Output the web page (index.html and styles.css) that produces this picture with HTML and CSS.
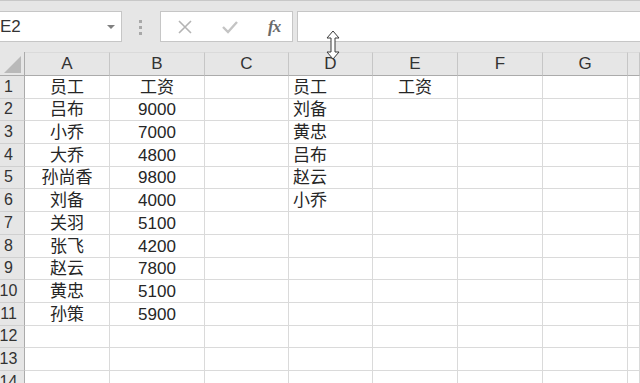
FILE: index.html
```html
<!DOCTYPE html>
<html lang="zh-CN">
<head>
    <meta charset="UTF-8">
    <title>工资表</title>
    <link rel="stylesheet" href="styles.css">
</head>
<body>
    <!-- Строка формул -->
    <div class="toolbar">
        <div class="name-box">
            <span class="cell-ref">E2</span>
            <span class="drop-arrow"></span>
        </div>
        <div class="grip"><i></i><i></i><i></i></div>
        <div class="formula-buttons">
            <svg class="btn-icon" width="14" height="14" viewBox="0 0 14 14"><path d="M1 1L13 13M13 1L1 13" stroke="#b4b4b4" stroke-width="1.6" fill="none"/></svg>
            <svg class="btn-icon" width="16" height="14" viewBox="0 0 16 14"><path d="M1 7L6 12L15 2" stroke="#c4c4c4" stroke-width="2.4" fill="none"/></svg>
            <span class="fx">fx</span>
        </div>
        <div class="formula-input"></div>
    </div>

    <!-- Лист -->
    <div class="sheet" id="sheet"></div>

    <svg class="cursor" width="18" height="30" viewBox="0 0 18 30">
        <path d="M9 1L15 8H11V22H15L9 29L3 22H7V8H3Z" fill="#fff" stroke="#3a3a3a" stroke-width="1"/>
    </svg>

    <script>
        const cols = ['A', 'B', 'C', 'D', 'E', 'F', 'G', ''];
        const rows = [
            ['员工', '工资', '', '员工', '工资'],
            ['吕布', '9000', '', '刘备'],
            ['小乔', '7000', '', '黄忠'],
            ['大乔', '4800', '', '吕布'],
            ['孙尚香', '9800', '', '赵云'],
            ['刘备', '4000', '', '小乔'],
            ['关羽', '5100'],
            ['张飞', '4200'],
            ['赵云', '7800'],
            ['黄忠', '5100'],
            ['孙策', '5900'],
            [], [], []
        ];

        const sheet = document.getElementById('sheet');
        const add = (cls, text) => {
            const el = document.createElement('div');
            el.className = cls;
            el.textContent = text || '';
            sheet.appendChild(el);
        };

        add('corner');
        cols.forEach(c => add('col-head', c));
        rows.forEach((row, i) => {
            add('row-head', i + 1);
            cols.forEach((c, j) => add(c === 'D' ? 'cell left' : 'cell', row[j]));
        });
    </script>
</body>
</html>
```

FILE: styles.css
```css
* {
    box-sizing: border-box;
    margin: 0;
    padding: 0;
}

body {
    width: 640px;
    height: 383px;
    overflow: hidden;
    position: relative;
    font-family: "Liberation Sans", "Noto Sans CJK SC", sans-serif;
    color: #262626;
    background: #fff;
}

/* Строка формул */
.toolbar {
    display: flex;
    align-items: flex-start;
    height: 52px;
    padding-top: 10px;
    background: #e6e6e6;
    border-top: 1px solid #c8c8c8;
}

.name-box {
    display: flex;
    align-items: center;
    justify-content: space-between;
    width: 123px;
    height: 31px;
    margin-left: -1px;
    padding: 0 6px 0 0;
    background: #fff;
    border: 1px solid #c6c6c6;
}

.cell-ref {
    font-size: 17px;
    color: #333;
}

.drop-arrow {
    width: 0;
    height: 0;
    border-left: 4px solid transparent;
    border-right: 4px solid transparent;
    border-top: 4px solid #808080;
}

.grip {
    display: flex;
    flex-direction: column;
    gap: 3px;
    width: 38px;
    padding: 9px 0 0 17px;
}

.grip i {
    width: 3px;
    height: 3px;
    background: #a8a8a8;
}

.formula-buttons {
    display: flex;
    align-items: center;
    gap: 30px;
    width: 133px;
    height: 31px;
    padding-left: 17px;
    background: #fff;
    border: 1px solid #c6c6c6;
}

.fx {
    font-family: "Liberation Serif", serif;
    font-style: italic;
    font-weight: bold;
    font-size: 17px;
    color: #6a6a6a;
    letter-spacing: -1px;
}

.formula-input {
    flex: 1;
    height: 31px;
    margin-left: 4px;
    background: #fff;
    border: 1px solid #c6c6c6;
    border-right: none;
}

/* Лист */
.sheet {
    display: grid;
    grid-template-columns: 25px 85px 95px 84px 84px 85px 85px 85px 1fr;
    grid-template-rows: 24px;
    grid-auto-rows: 22.7px;
    font-size: 17px;
}

.corner,
.col-head,
.row-head {
    background: #e6e6e6;
    color: #333;
}

.corner {
    position: relative;
    border-right: 1px solid #ababab;
    border-bottom: 1px solid #ababab;
}

.corner::after {
    content: "";
    position: absolute;
    right: 3px;
    bottom: 2px;
    border-left: 17px solid transparent;
    border-bottom: 17px solid #b9b9b9;
}

.col-head {
    display: flex;
    align-items: flex-end;
    justify-content: center;
    padding-bottom: 1px;
    line-height: 20px;
    border-top: 1px solid #dadada;
    border-right: 1px solid #c6c6c6;
    border-bottom: 1px solid #ababab;
}

.row-head {
    display: flex;
    align-items: flex-end;
    justify-content: center;
    padding: 0 7px 1px 0;
    font-size: 16px;
    line-height: 20px;
    white-space: nowrap;
    border-right: 1px solid #ababab;
    border-bottom: 1px solid #d0d0d0;
}

.cell {
    display: flex;
    align-items: flex-end;
    justify-content: center;
    line-height: 21px;
    border-right: 1px solid #dadada;
    border-bottom: 1px solid #dadada;
}

.cell.left {
    justify-content: flex-start;
    padding-left: 4px;
}

.cursor {
    position: absolute;
    left: 324px;
    top: 30px;
}
```
